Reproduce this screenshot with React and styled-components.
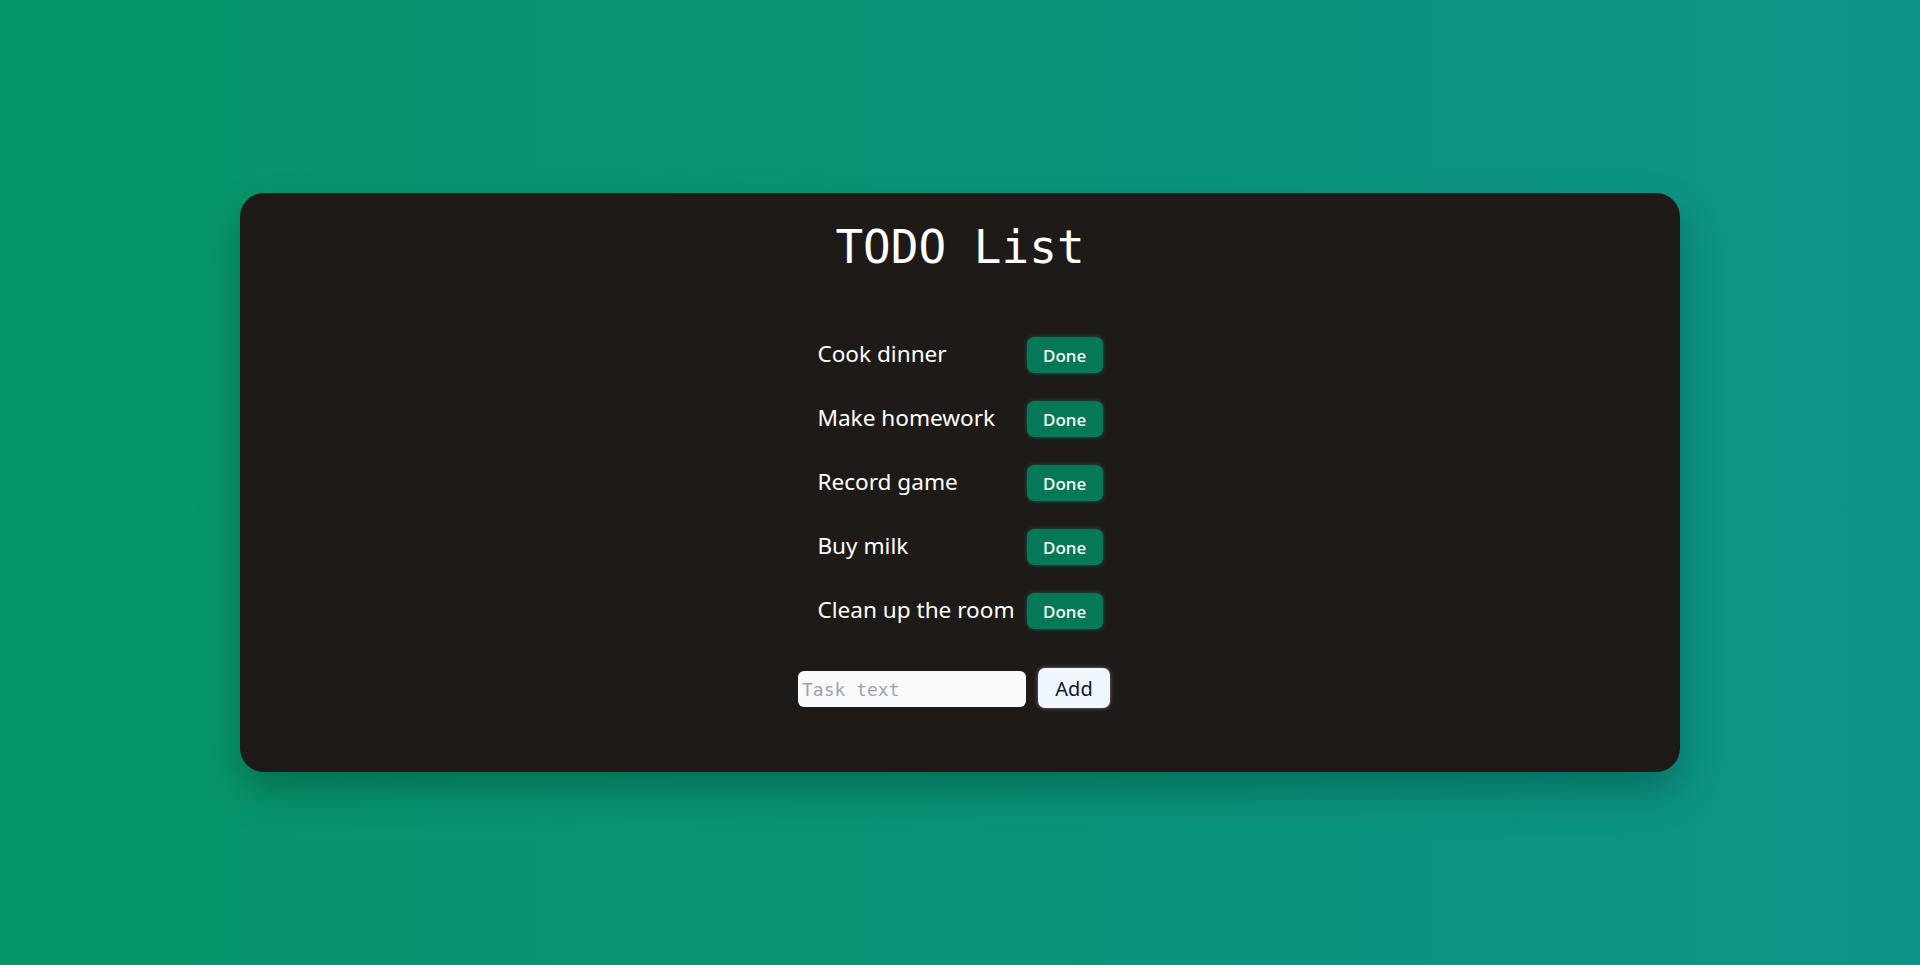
import React, { useState } from 'react';
import styled, { createGlobalStyle } from 'styled-components';

const GlobalStyle = createGlobalStyle`
  html, body {
    margin: 0;
    padding: 0;
    height: 100%;
  }

  #root {
    height: 100%;
  }
`;

const Page = styled.main`
  min-height: 100vh;
  display: flex;
  align-items: center;
  justify-content: center;
  background: linear-gradient(to right, #059669, #0d9488);
  font-family: "Noto Sans", "Open Sans", sans-serif;
`;

const Card = styled.section`
  width: 75%;
  box-sizing: border-box;
  padding: 27px 0 64px;
  background-color: #1e1a17;
  border-radius: 24px;
  box-shadow: 0 20px 40px rgba(0, 0, 0, 0.25);
  display: flex;
  flex-direction: column;
  align-items: center;
`;

const Title = styled.h1`
  margin: 0 0 63px;
  color: #ffffff;
  font-family: "DejaVu Sans Mono", monospace;
  font-size: 46px;
  font-weight: 400;
  line-height: normal;
`;

const TaskList = styled.ul`
  list-style: none;
  margin: 0 0 39px;
  padding: 0;
  display: grid;
  grid-template-columns: auto auto;
  column-gap: 12px;
  row-gap: 28px;
  align-items: center;
`;

const TaskRow = styled.li`
  display: contents;
`;

const TaskText = styled.span`
  color: #ffffff;
  font-size: 22.6px;
  line-height: 1.3;
  padding-bottom: 2px;
`;

const DoneButton = styled.button`
  width: 76px;
  height: 36px;
  border: none;
  border-radius: 7px;
  background-color: #047857;
  color: #ffffff;
  font-family: "Noto Sans", sans-serif;
  font-size: 17px;
  font-weight: 500;
  box-shadow: 0 0 4px rgba(16, 185, 129, 0.45);
  cursor: pointer;
`;

const Form = styled.form`
  display: flex;
  align-items: baseline;
  gap: 12px;
  padding-right: 12px;
`;

const TaskInput = styled.input`
  width: 228px;
  height: 36px;
  box-sizing: border-box;
  padding: 0 4px;
  border: none;
  border-radius: 6px;
  background-color: #f9fafb;
  font-family: "DejaVu Sans Mono", monospace;
  font-size: 18px;
  outline: none;

  &::placeholder {
    color: #9ca3af;
  }
`;

const AddButton = styled.button`
  width: 72px;
  height: 40px;
  border: none;
  border-radius: 7px;
  background-color: #eff6ff;
  color: #0f172a;
  font-family: "Noto Sans", sans-serif;
  font-size: 20px;
  box-shadow: 0 0 4px rgba(200, 200, 200, 0.5);
  cursor: pointer;
`;

const initialTasks = [
  'Cook dinner',
  'Make homework',
  'Record game',
  'Buy milk',
  'Clean up the room',
];

const App = () => {
  const [tasks, setTasks] = useState(initialTasks);
  const [text, setText] = useState('');

  const addTask = (e) => {
    e.preventDefault();
    if (!text.trim()) return;
    setTasks([...tasks, text.trim()]);
    setText('');
  };

  const removeTask = (index) => {
    setTasks(tasks.filter((_, i) => i !== index));
  };

  return (
    <>
      <GlobalStyle />
      <Page>
        <Card>
          <Title>TODO List</Title>
          <TaskList>
            {tasks.map((task, i) => (
              <TaskRow key={task + i}>
                <TaskText>{task}</TaskText>
                <DoneButton type="button" onClick={() => removeTask(i)}>
                  Done
                </DoneButton>
              </TaskRow>
            ))}
          </TaskList>
          <Form onSubmit={addTask}>
            <TaskInput
              placeholder="Task text"
              value={text}
              onChange={(e) => setText(e.target.value)}
            />
            <AddButton type="submit">Add</AddButton>
          </Form>
        </Card>
      </Page>
    </>
  );
};

export default App;
